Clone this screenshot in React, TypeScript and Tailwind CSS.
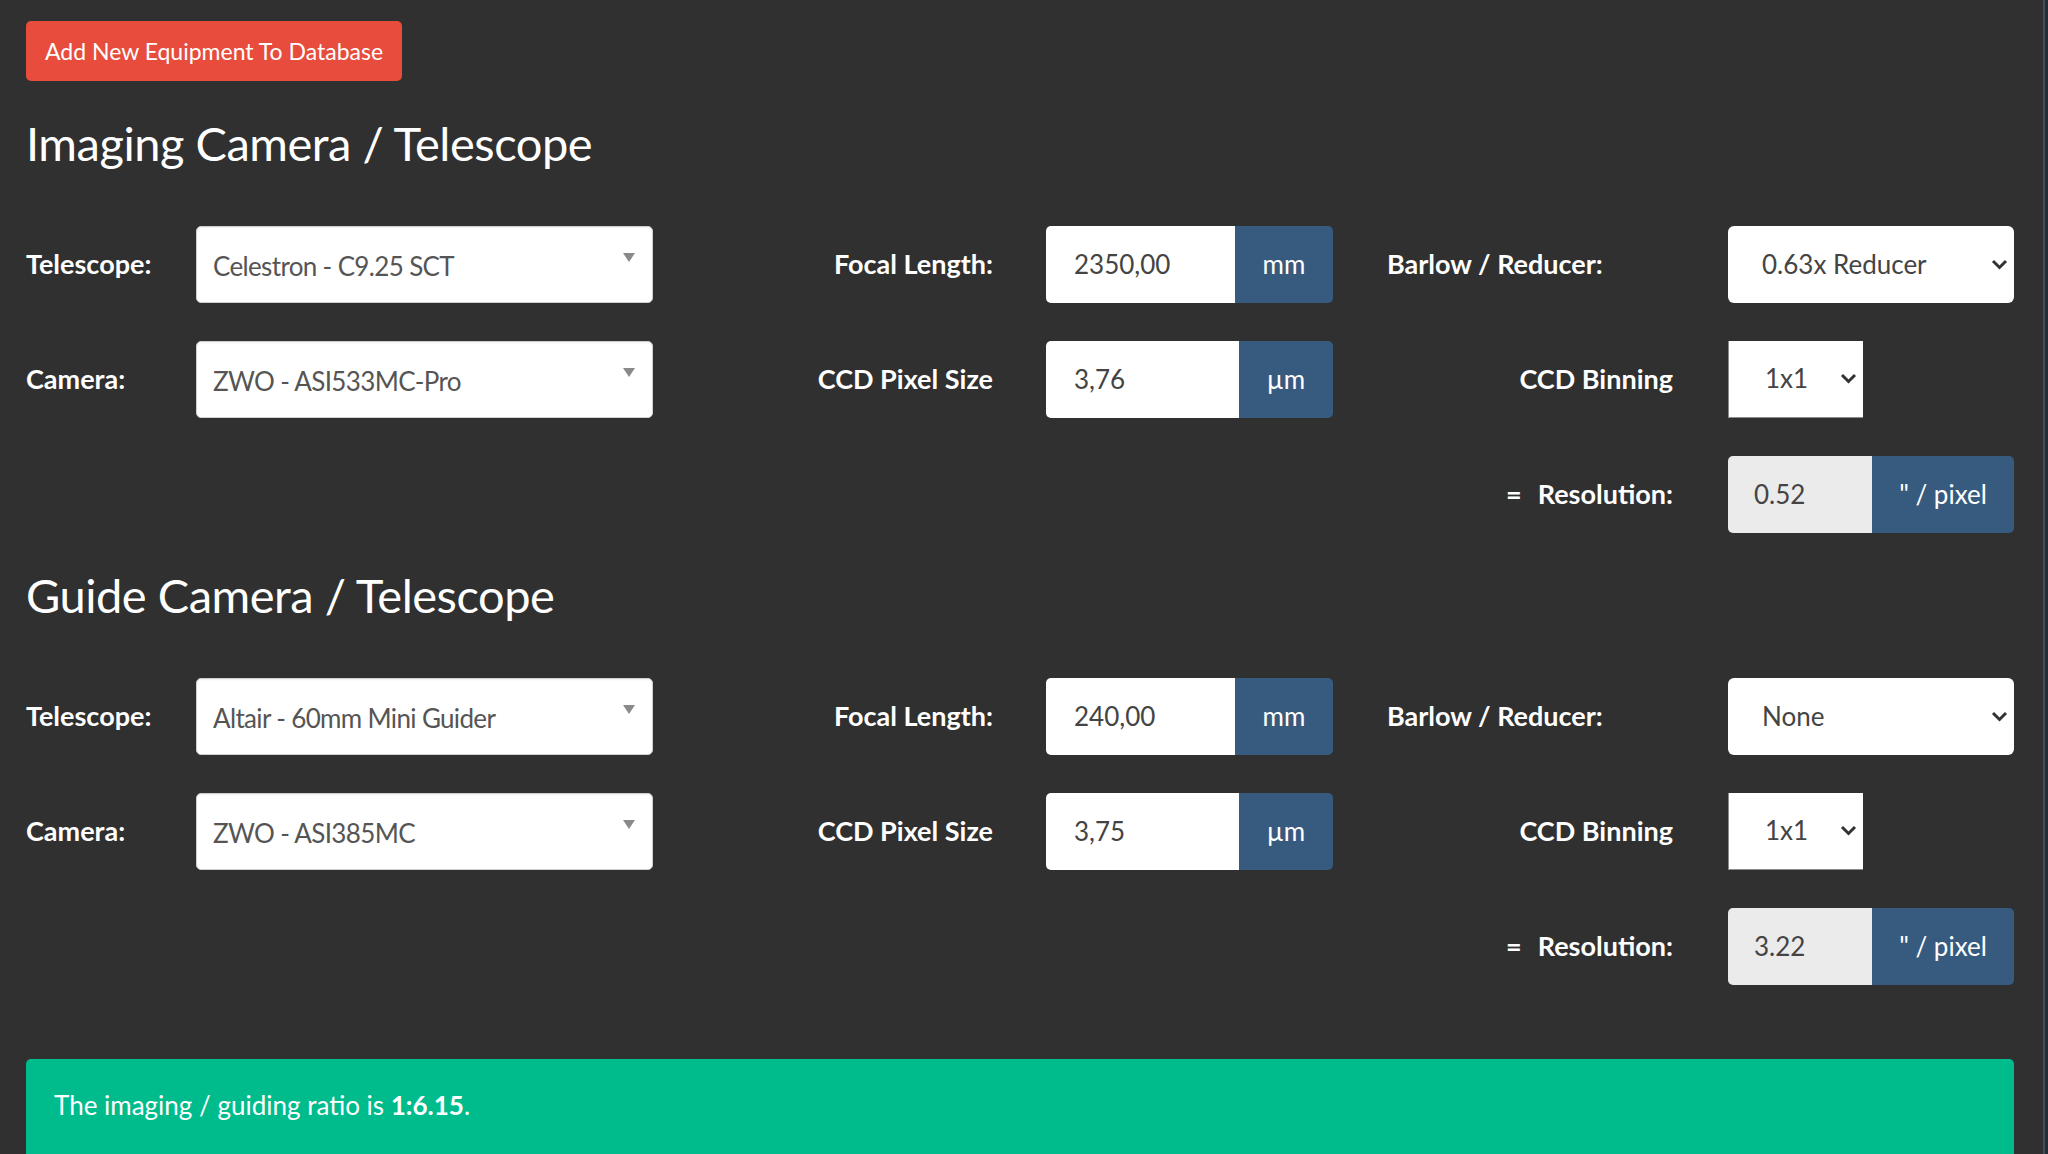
import React from 'react';

type Setup = {
  title: string;
  telescope: string;
  camera: string;
  focal: string;
  pixel: string;
  reducer: string;
  binning: string;
  resolution: string;
};

const setups: Setup[] = [
  {
    title: 'Imaging Camera / Telescope',
    telescope: 'Celestron - C9.25 SCT',
    camera: 'ZWO - ASI533MC-Pro',
    focal: '2350,00',
    pixel: '3,76',
    reducer: '0.63x Reducer',
    binning: '1x1',
    resolution: '0.52',
  },
  {
    title: 'Guide Camera / Telescope',
    telescope: 'Altair - 60mm Mini Guider',
    camera: 'ZWO - ASI385MC',
    focal: '240,00',
    pixel: '3,75',
    reducer: 'None',
    binning: '1x1',
    resolution: '3.22',
  },
];

// searchable dropdown (chosen-style) with the small grey triangle
function EquipmentSelect({ value }: { value: string }) {
  return (
    <div className="relative flex items-center h-full bg-white border border-[#cfcfcf] rounded-[5px] pl-[16px] pt-[5px] text-[#555] tracking-[-0.025em] shadow-[inset_0_1px_2px_rgba(0,0,0,0.06)]">
      {value}
      <svg className="absolute right-[17px] top-[26px]" width="12" height="9" viewBox="0 0 12 9">
        <polygon points="0,0 12,0 6,9" fill="#8a8a8a" />
      </svg>
    </div>
  );
}

function Chevron() {
  return (
    <svg width="17" height="11" viewBox="0 0 17 11">
      <polyline points="2,2 8.5,8.5 15,2" fill="none" stroke="#333" strokeWidth="3" />
    </svg>
  );
}

function NativeSelect({ value, className }: { value: string; className: string }) {
  return (
    <div className={`flex items-center justify-between h-full bg-white text-[#444] pr-[6px] ${className}`}>
      <span>{value}</span>
      <Chevron />
    </div>
  );
}

function InputGroup({
  value,
  unit,
  unitWidth,
  readOnly,
}: {
  value: string;
  unit: string;
  unitWidth: string;
  readOnly?: boolean;
}) {
  return (
    <div className="flex h-full rounded-[5px] overflow-hidden">
      <div
        className={`flex-1 flex items-center text-[#444] ${
          readOnly ? 'bg-[#ebebeb] pl-[26px]' : 'bg-white pl-[28px]'
        }`}
      >
        {value}
      </div>
      <div className={`flex items-center justify-center bg-[#375a7f] text-white ${unitWidth}`}>{unit}</div>
    </div>
  );
}

function SetupSection({ setup }: { setup: Setup }) {
  const label = 'flex items-center font-bold text-white text-[27px]';
  return (
    <section className="mt-[33px]">
      <h2 className="text-[47px] leading-[1.25] text-white tracking-[-0.01em]">{setup.title}</h2>
      <div className="mt-[53px] grid grid-cols-[170px_457px_393px_287px_395px_286px] auto-rows-[77px] gap-y-[38px]">
        <div className={label}>Telescope:</div>
        <EquipmentSelect value={setup.telescope} />
        <div className={`${label} justify-end pr-[53px]`}>Focal Length:</div>
        <InputGroup value={setup.focal} unit="mm" unitWidth="w-[98px]" />
        <div className={`${label} pl-[54px]`}>Barlow / Reducer:</div>
        <NativeSelect value={setup.reducer} className="rounded-[6px] pl-[34px]" />

        <div className={label}>Camera:</div>
        <EquipmentSelect value={setup.camera} />
        <div className={`${label} justify-end pr-[53px]`}>CCD Pixel Size</div>
        <InputGroup value={setup.pixel} unit="µm" unitWidth="w-[94px]" />
        <div className={`${label} justify-end pr-[55px]`}>CCD Binning</div>
        <div className="h-full">
          <NativeSelect value={setup.binning} className="w-[135px] pl-[36px] border-l border-b border-[#8c8c8c]" />
        </div>

        <div className="col-span-4" />
        <div className={`${label} justify-end pr-[55px] gap-[16px]`}>
          <span>=</span>
          <span>Resolution:</span>
        </div>
        <InputGroup value={setup.resolution} unit={'" / pixel'} unitWidth="w-[142px]" readOnly />
      </div>
    </section>
  );
}

export default function App() {
  return (
    <div
      className="flex h-screen overflow-hidden bg-[#303030] text-[26px]"
      style={{ fontFamily: 'Lato, "Liberation Sans", sans-serif' }}
    >
      <main className="flex-1 pl-[26px] pr-[29px] pt-[21px]">
        <button className="h-[60px] px-[19px] rounded-[5px] bg-[#e74c3c] text-white text-[23px]">
          Add New Equipment To Database
        </button>

        {setups.map((s) => (
          <SetupSection key={s.title} setup={s} />
        ))}

        <div className="mt-[74px] rounded-[5px] bg-[#00bc8c] px-[28px] pt-[27px] pb-[48px] text-white">
          The imaging / guiding ratio is <strong className="font-bold">1:6.15</strong>.
        </div>
      </main>
      <div className="w-[5px] border-l-2 border-[#3b4e6a] bg-[#2a2a2a]" />
    </div>
  );
}
